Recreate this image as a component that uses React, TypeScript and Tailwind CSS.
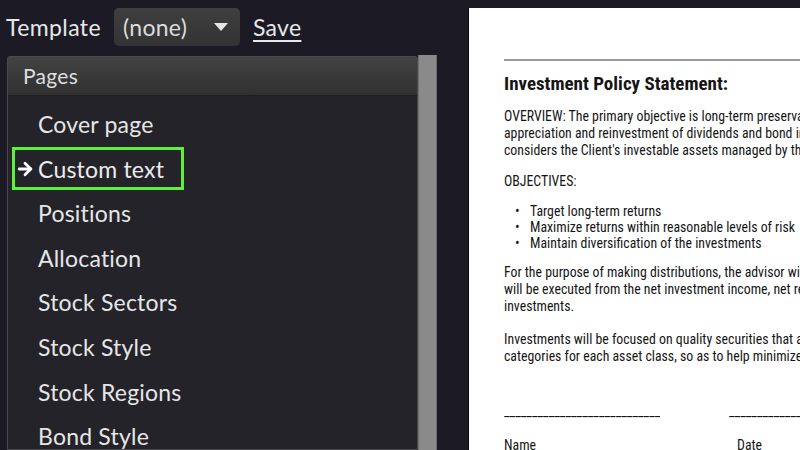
import React from 'react';
import { ArrowRight } from 'lucide-react';

const pages = [
  'Cover page',
  'Custom text',
  'Positions',
  'Allocation',
  'Stock Sectors',
  'Stock Style',
  'Stock Regions',
  'Bond Style',
  'Bond Sectors',
];

const uiFont = { fontFamily: 'Lato, "Open Sans", sans-serif' };
const docFont = { fontFamily: '"Liberation Sans Narrow", "Roboto Condensed", Roboto, sans-serif' };

export default function App() {
  return (
    <div className="w-[800px] h-[450px] overflow-hidden bg-[#1c1b25] flex" style={uiFont}>
      {/* Left: template + pages list */}
      <div className="w-[468px] shrink-0 flex flex-col">
        <div className="h-[56px] shrink-0 flex items-center pl-[6px] pb-[2px]">
          <span className="text-[23px] tracking-[0.4px] text-[#e8e8e8]">Template</span>
          <div className="ml-[13px] w-[126px] h-[38px] rounded-[5px] bg-gradient-to-b from-[#3f3f3f] to-[#333333] flex items-center pl-[9px] pr-[12px] justify-between">
            <span className="text-[23px] tracking-[0.3px] text-[#dcdcdc]">(none)</span>
            <span className="w-0 h-0 border-l-[7px] border-r-[7px] border-t-[8px] border-l-transparent border-r-transparent border-t-[#e6e6e6]" />
          </div>
          <span className="ml-[13px] text-[23px] tracking-[0.3px] text-[#e8e8e8] underline underline-offset-[4px] decoration-[2px]">Save</span>
        </div>

        <div className="flex flex-1 min-h-0 pl-[7px]">
          <div className="w-[411px] border border-[#4a4a4e] rounded-t-[3px] bg-[#24232a] flex flex-col">
            <div className="h-[39px] shrink-0 bg-gradient-to-b from-[#434343] to-[#303030] border-b border-[#1e1e22] flex items-center pl-[15px]">
              <span className="text-[21px] tracking-[0.3px] text-[#dedede]">Pages</span>
            </div>
            <div className="pt-[6px]">
              {pages.map((p) => {
                const selected = p === 'Custom text';
                return selected ? (
                  <div key={p} className="h-[44.6px] flex items-center">
                    <div className="ml-[4px] w-[172px] h-[43px] border-[3px] border-[#5ff03a] flex items-center">
                      <ArrowRight className="w-[20px] h-[20px] text-white" strokeWidth={3.4} />
                      <span className="ml-[3px] text-[23px] tracking-[0.2px] text-[#ececec]">{p}</span>
                    </div>
                  </div>
                ) : (
                  <div key={p} className="h-[44.6px] flex items-center pl-[30px]">
                    <span className="text-[23px] tracking-[0.2px] text-[#e6e6e6]">{p}</span>
                  </div>
                );
              })}
            </div>
          </div>
          <div className="w-[19px] bg-[#8a8a8a] border-x border-[#6e6e6e] mt-[-1px]" />
        </div>
      </div>

      {/* Right: document preview */}
      <div className="flex-1 mt-[8px] bg-white border-l border-[#0c0c10] overflow-hidden text-[#151515]" style={docFont}>
        <div className="pl-[35px] whitespace-nowrap">
          <div className="mt-[51px] h-[2px] bg-[#9a9a9a]" />
          <div className="mt-[12px] text-[19px] font-bold leading-[22px]">Investment Policy Statement:</div>
          <div className="mt-[13px] text-[13.8px] leading-[17px]">
            <div>OVERVIEW: The primary objective is long-term preservation of capital with growth through</div>
            <div>appreciation and reinvestment of dividends and bond interest. This investment policy</div>
            <div>considers the Client's investable assets managed by the advisor.</div>
          </div>
          <div className="mt-[14px] text-[13.8px] leading-[17px]">OBJECTIVES:</div>
          <ul className="mt-[13px] text-[13.8px] leading-[16px]">
            {[
              'Target long-term returns',
              'Maximize returns within reasonable levels of risk',
              'Maintain diversification of the investments',
            ].map((b) => (
              <li key={b} className="flex">
                <span className="w-[26px] pl-[11px]">•</span>
                <span>{b}</span>
              </li>
            ))}
          </ul>
          <div className="mt-[13px] text-[13.8px] leading-[17px]">
            <div>For the purpose of making distributions, the advisor will consider total return. Distributions</div>
            <div>will be executed from the net investment income, net realized gains and principal of the</div>
            <div>investments.</div>
          </div>
          <div className="mt-[16px] text-[13.8px] leading-[17px]">
            <div>Investments will be focused on quality securities that are diversified across the various</div>
            <div>categories for each asset class, so as to help minimize overall portfolio risk.</div>
          </div>
          <div className="mt-[38px] flex text-[13.8px] leading-[17px]">
            <span className="w-[156px] shrink-0 overflow-hidden">________________________________</span>
            <span className="ml-[69px] shrink-0">________________________________</span>
          </div>
          <div className="mt-[17px] flex text-[13.8px] leading-[17px]">
            <span className="w-[233px] shrink-0">Name</span>
            <span>Date</span>
          </div>
        </div>
      </div>
    </div>
  );
}
